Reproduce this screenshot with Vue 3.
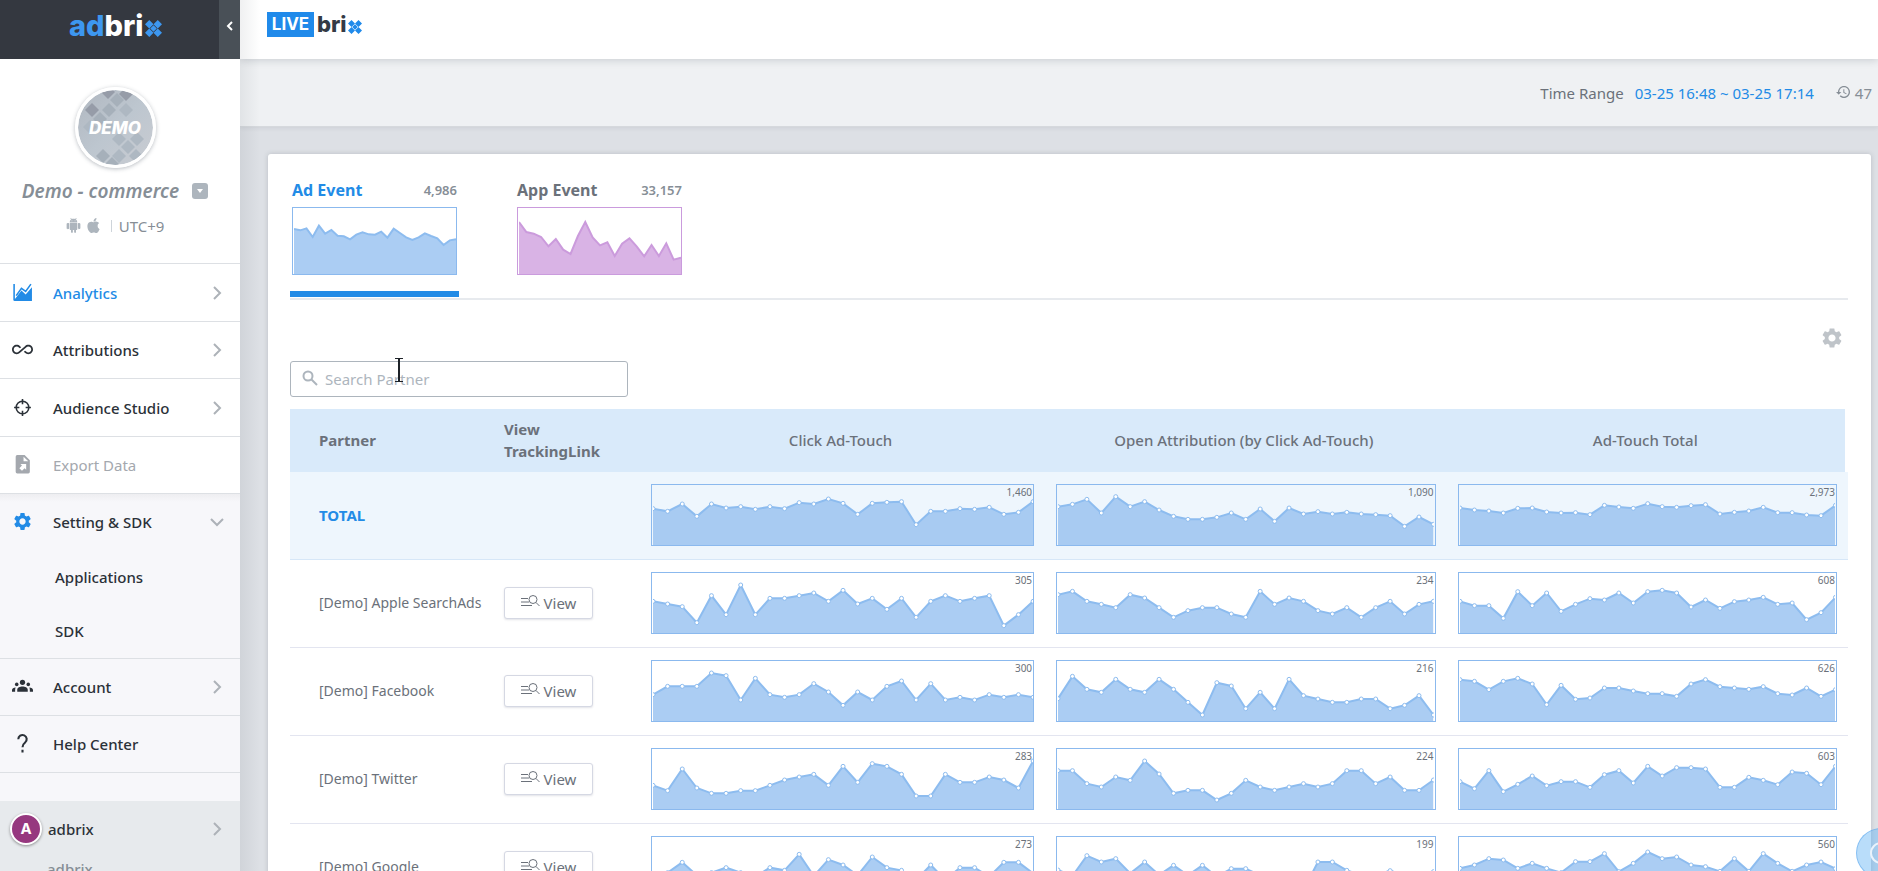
<script setup>
import { ref } from 'vue'

const PLOT_HEIGHT = 180
const search = ref('')

const mainNav = [
  { icon: 'chart', label: 'Analytics', state: 'active', arrow: true },
  { icon: 'infinity', label: 'Attributions', arrow: true },
  { icon: 'target', label: 'Audience Studio', arrow: true },
  { icon: 'export', label: 'Export Data', state: 'disabled' },
]

const bottomNav = [
  { icon: 'group', label: 'Account', arrow: true },
  { icon: 'help', label: 'Help Center' },
]

// Plot points are depths below the top edge of the plot, in thirds of a pixel.
const events = [
  {
    name: 'Ad Event', total: '4,986', tone: 'blue', active: true,
    points: [63, 67, 61, 87, 53, 77, 66, 83, 85, 94, 80, 73, 79, 80, 71, 89, 62, 75, 88, 96, 88, 76, 84, 91, 111, 97, 94],
  },
  {
    name: 'App Event', total: '33,157', tone: 'purple', active: false,
    points: [42, 72, 77, 87, 115, 93, 125, 138, 84, 42, 88, 112, 103, 144, 107, 91, 116, 145, 111, 144, 106, 155, 149],
  },
]

const rows = [
  {
    name: 'TOTAL', total: true,
    cells: [
      { value: '1,460', points: [71, 79, 57, 94, 57, 69, 65, 73, 65, 71, 53, 57, 42, 55, 88, 55, 52, 50, 119, 79, 79, 71, 73, 67, 88, 82, 50] },
      { value: '1,090', points: [65, 58, 43, 84, 35, 65, 50, 75, 94, 103, 103, 97, 84, 103, 72, 109, 69, 87, 80, 87, 82, 87, 89, 92, 124, 96, 118] },
      { value: '2,973', points: [69, 75, 78, 84, 70, 69, 81, 84, 83, 89, 61, 66, 70, 56, 65, 67, 62, 59, 87, 82, 78, 67, 83, 83, 90, 92, 61] },
    ],
  },
  {
    name: '[Demo] Apple SearchAds',
    cells: [
      { value: '305', points: [85, 93, 101, 149, 68, 125, 36, 125, 76, 76, 68, 60, 85, 52, 93, 76, 109, 76, 133, 85, 68, 85, 76, 68, 158, 125, 85] },
      { value: '234', points: [65, 55, 85, 94, 104, 65, 75, 104, 133, 113, 104, 104, 123, 133, 55, 94, 75, 85, 113, 123, 104, 133, 104, 85, 123, 94, 85] },
      { value: '608', points: [85, 98, 98, 136, 56, 98, 60, 115, 94, 77, 81, 60, 90, 56, 52, 60, 102, 81, 106, 86, 81, 73, 94, 90, 140, 119, 73] },
    ],
  },
  {
    name: '[Demo] Facebook',
    cells: [
      { value: '300', points: [101, 76, 76, 76, 36, 44, 117, 52, 101, 109, 101, 68, 93, 133, 93, 117, 76, 60, 117, 68, 117, 109, 117, 101, 109, 101, 109] },
      { value: '216', points: [113, 46, 85, 94, 55, 85, 94, 55, 85, 124, 162, 65, 75, 143, 94, 143, 55, 104, 114, 124, 124, 114, 114, 143, 133, 104, 162] },
      { value: '626', points: [56, 61, 86, 61, 52, 69, 131, 73, 115, 111, 81, 81, 90, 98, 98, 106, 69, 56, 77, 81, 85, 77, 98, 102, 81, 106, 86] },
    ],
  },
  {
    name: '[Demo] Twitter',
    cells: [
      { value: '283', points: [109, 125, 60, 117, 133, 133, 125, 125, 109, 93, 84, 76, 109, 52, 100, 44, 52, 76, 141, 141, 76, 100, 100, 84, 93, 117, 36] },
      { value: '224', points: [65, 65, 104, 114, 84, 94, 36, 75, 133, 124, 124, 153, 133, 94, 114, 124, 114, 104, 114, 104, 65, 65, 104, 84, 124, 124, 93] },
      { value: '603', points: [98, 119, 65, 128, 106, 81, 110, 98, 98, 115, 77, 65, 102, 52, 81, 56, 56, 60, 115, 115, 85, 94, 107, 69, 73, 107, 52] },
    ],
  },
  {
    name: '[Demo] Google',
    cells: [
      { value: '273', points: [125, 107, 76, 115, 107, 92, 107, 119, 92, 100, 52, 117, 68, 84, 115, 60, 92, 100, 129, 84, 129, 92, 92, 119, 76, 76, 109] },
      { value: '199', points: [99, 117, 56, 75, 65, 109, 75, 114, 85, 115, 85, 119, 95, 95, 115, 130, 135, 159, 75, 75, 100, 115, 115, 101, 115, 115, 104] },
      { value: '560', points: [94, 84, 65, 69, 94, 79, 94, 107, 74, 74, 50, 104, 79, 45, 65, 60, 84, 89, 103, 65, 103, 50, 79, 103, 84, 75, 95] },
    ],
  },
]

const avatarDiamonds = [
  [30, 2, 2], [48, 4, 2], [39, 10, 1], [14, 20, 2], [31, 20, 1], [48, 20, 0], [22, 29, 1],
  [12, 37, 0], [31, 37, 0], [41, 49, 0], [59, 49, 0], [50, 57, 0], [41, 66, 0], [58, 66, 0],
  [25, 66, 1], [34, 74, 1],
]

const line = (points) => points.map((y, i) => `${i},${y}`).join(' ')
const area = (points, height) => `0,${height} ${line(points)} ${points.length - 1},${height}`
</script>

<template>
  <div class="app">
    <aside class="sidebar">
      <div class="brand">
        <a class="brand-logo" href="#" aria-label="adbrix">
          <span class="brand-ad">ad</span><span>bri</span>
          <svg class="brand-x" viewBox="0 0 18 18" aria-hidden="true">
            <path d="M4.500 0L9 4.500 4.500 9 0 4.500zM13.500 0L18 4.500 13.500 9 9 4.500zM9 5.500l3.500 3.500L9 12.500 5.500 9zM4.500 9L9 13.500 4.500 18 0 13.500zM13.500 9l4.500 4.500-4.500 4.500L9 13.500z" />
          </svg>
        </a>
        <button class="collapse" type="button" aria-label="Collapse menu">
          <svg viewBox="0 0 8 10" aria-hidden="true"><path d="M6 1L2 5l4 4" /></svg>
        </button>
      </div>

      <section class="profile">
        <div class="avatar">
          <svg class="avatar-art" viewBox="0 0 75 75" aria-hidden="true">
            <defs>
              <linearGradient id="avatar-bg" x1="0" y1="0" x2="1" y2="1">
                <stop offset="0" stop-color="#b0b7c0" />
                <stop offset="0.5" stop-color="#bdc6cf" />
                <stop offset="1" stop-color="#c9ccd2" />
              </linearGradient>
            </defs>
            <rect width="75" height="75" fill="url(#avatar-bg)" />
            <path
              v-for="([x, y, shade], i) in avatarDiamonds"
              :key="i"
              :class="`diamond-${shade}`"
              :d="`M${x} ${y - 7}l7 7-7 7-7-7z`"
            />
          </svg>
          <span class="avatar-text">DEMO</span>
        </div>
        <div class="profile-name">
          <span>Demo - commerce</span>
          <button class="profile-menu" type="button" aria-label="Switch app">
            <svg viewBox="0 0 8 6" aria-hidden="true"><path d="M1 1h6L4 5z" /></svg>
          </button>
        </div>
        <div class="profile-meta">
          <svg class="platform" viewBox="0 0 24 24" aria-hidden="true">
            <path d="M6 18c0 .55.45 1 1 1h1v3.500c0 .83.67 1.500 1.500 1.500s1.500-.67 1.500-1.500V19h2v3.500c0 .83.67 1.500 1.500 1.500s1.500-.67 1.500-1.500V19h1c.55 0 1-.45 1-1V8H6v10zM3.500 8C2.400 8 1 8.670 1 9.500v7c0 .83.67 1.500 2 1.500S5 17.330 5 16.500v-7C5 8.670 4.330 8 3.500 8zm17 0c-.83 0-1.500.67-1.500 1.500v7c0 .83.67 1.500 1.500 1.500S23 17.330 23 16.500v-7c0-.83-1.670-1.500-2.500-1.500zm-4.970-5.840l1.300-1.300c.2-.2.2-.51 0-.71-.2-.2-.51-.2-.71 0l-1.480 1.480C13.850 1.230 12.950 1 12 1c-.96 0-1.860.23-2.660.63L7.850.15c-.2-.2-.51-.2-.71 0-.2.2-.2.51 0 .71l1.310 1.310C6.970 3.260 6 5.010 6 7h12c0-1.990-.97-3.750-2.470-4.840zM10 5H9V4h1v1zm5 0h-1V4h1v1z" />
          </svg>
          <svg class="platform" viewBox="0 0 24 24" aria-hidden="true">
            <path d="M12.152 6.896c-.948 0-2.415-1.078-3.960-1.040-2.040.027-3.910 1.183-4.961 3.014-2.117 3.675-.546 9.103 1.519 12.090 1.013 1.454 2.208 3.090 3.792 3.039 1.520-.065 2.090-.987 3.935-.987 1.831 0 2.350.987 3.960.948 1.637-.026 2.676-1.480 3.676-2.948 1.156-1.688 1.636-3.325 1.662-3.415-.039-.013-3.182-1.221-3.220-4.857-.026-3.040 2.480-4.494 2.597-4.559-1.429-2.090-3.623-2.324-4.390-2.376-2-.156-3.675 1.090-4.610 1.090zM15.530 3.830c.843-1.012 1.400-2.427 1.245-3.830-1.207.052-2.662.805-3.532 1.818-.78.896-1.454 2.338-1.273 3.714 1.338.104 2.715-.688 3.559-1.701" />
          </svg>
          <span class="divider"></span>
          <span>UTC+9</span>
        </div>
      </section>

      <nav class="menu" aria-label="Main">
        <a v-for="item in mainNav" :key="item.label" class="menu-item" :class="item.state" href="#">
          <svg v-if="item.icon === 'chart'" class="menu-icon" viewBox="0 0 20 20" aria-hidden="true">
            <path class="thin" d="M2 2v15.500M4 13l5-7 4 3 5-7" />
            <path d="M2 18v-2h1l6-8 4 4 6-7v13z" />
          </svg>
          <svg v-else-if="item.icon === 'infinity'" class="menu-icon" viewBox="0 0 24 24" aria-hidden="true">
            <path d="M18.600 6.620C17.160 6.620 15.800 7.180 14.830 8.150L7.800 14.390C7.160 15.030 6.310 15.380 5.400 15.380 3.530 15.380 2 13.870 2 12 2 10.130 3.530 8.620 5.400 8.620 6.310 8.620 7.160 8.970 7.840 9.650L8.970 10.650 10.500 9.310 9.220 8.200C8.200 7.180 6.840 6.620 5.400 6.620 2.420 6.620 0 9.040 0 12 0 14.960 2.420 17.380 5.400 17.380 6.840 17.380 8.200 16.820 9.170 15.850L16.200 9.610C16.840 8.970 17.690 8.620 18.600 8.620 20.470 8.620 22 10.130 22 12 22 13.870 20.470 15.380 18.600 15.380 17.700 15.380 16.840 15.030 16.160 14.350L15 13.340 13.500 14.680 14.780 15.800C15.800 16.810 17.150 17.370 18.600 17.370 21.580 17.370 24 14.960 24 12 24 9 21.580 6.620 18.600 6.620Z" />
          </svg>
          <svg v-else-if="item.icon === 'target'" class="menu-icon" viewBox="0 0 20 20" aria-hidden="true">
            <circle class="ring" cx="10" cy="10" r="6" />
            <path class="thin" d="M10 2v5M10 13v5M2 10h5M13 10h5" />
          </svg>
          <svg v-else class="menu-icon" viewBox="0 0 20 20" aria-hidden="true">
            <path fill-rule="evenodd" d="M5 1h7l5 5v11a1.500 1.500 0 0 1-1.500 1.500h-10.500A1.500 1.500 0 0 1 3.500 17V2.500A1.500 1.500 0 0 1 5 1zM11 2.500V7h4.500zM8 9.500l1.500 1.500L7 13.500l2.500 2.500 2.500-2.500 1.500 1.500V9.500z" />
          </svg>
          <span>{{ item.label }}</span>
          <svg v-if="item.arrow" class="arrow" viewBox="0 0 14 14" aria-hidden="true"><path d="M4 1l6 6-6 6" /></svg>
        </a>
      </nav>

      <nav class="menu menu-lower" aria-label="Settings">
        <a class="menu-item open" href="#">
          <svg class="menu-icon gear-blue" viewBox="0 0 24 24" aria-hidden="true">
            <path d="M19.140 12.940c.04-.3.06-.61.06-.94 0-.32-.02-.64-.07-.94l2.030-1.580c.18-.14.23-.41.12-.61l-1.920-3.320c-.12-.22-.37-.29-.59-.22l-2.390.96c-.5-.38-1.030-.7-1.620-.94l-.36-2.540c-.04-.24-.24-.41-.48-.41h-3.840c-.24 0-.43.17-.47.41l-.36 2.540c-.59.24-1.130.57-1.620.94l-2.390-.96c-.22-.08-.47 0-.59.22L2.740 8.870c-.12.21-.08.47.12.61l2.030 1.580c-.05.3-.09.63-.09.94s.02.64.07.94l-2.030 1.580c-.18.14-.23.41-.12.61l1.920 3.320c.12.22.37.29.59.22l2.390-.96c.5.38 1.030.7 1.620.94l.36 2.540c.05.24.24.41.48.41h3.840c.24 0 .44-.17.47-.41l.36-2.540c.59-.24 1.130-.56 1.620-.94l2.390.96c.22.08.47 0 .59-.22l1.920-3.320c.12-.22.07-.47-.12-.61l-2.010-1.580zM12 15.600c-1.980 0-3.600-1.620-3.600-3.600s1.620-3.600 3.600-3.600 3.600 1.620 3.600 3.600-1.620 3.600-3.600 3.600z" />
          </svg>
          <span>Setting &amp; SDK</span>
          <svg class="arrow" viewBox="0 0 14 14" aria-hidden="true"><path d="M1 4l6 6 6-6" /></svg>
        </a>
        <div class="submenu">
          <a href="#">Applications</a>
          <a href="#">SDK</a>
        </div>
        <a v-for="item in bottomNav" :key="item.label" class="menu-item" href="#">
          <svg v-if="item.icon === 'group'" class="menu-icon" viewBox="0 0 20 20" aria-hidden="true">
            <circle cx="10" cy="6" r="2.500" />
            <circle cx="4.500" cy="8" r="1.700" />
            <circle cx="15.500" cy="8" r="1.700" />
            <path d="M5 15v-2c0-2 2.500-3 5-3s5 1 5 3v2zM0 15v-1.500c0-1.500 1.500-2.500 3.500-2.500C3 12 3 13 3 15zM20 15v-1.500c0-1.500-1.500-2.500-3.500-2.500.5 1 .5 2 .5 4z" />
          </svg>
          <svg v-else class="menu-icon" viewBox="0 0 20 20" aria-hidden="true">
            <path class="bold" d="M6 6a4 4 0 1 1 6.500 3C11 10.200 10 11 10 13.500M10 16v2.500" />
          </svg>
          <span>{{ item.label }}</span>
          <svg v-if="item.arrow" class="arrow" viewBox="0 0 14 14" aria-hidden="true"><path d="M4 1l6 6-6 6" /></svg>
        </a>
      </nav>

      <footer class="account">
        <a class="account-row" href="#">
          <span class="account-badge">A</span>
          <span>adbrix</span>
          <svg class="arrow" viewBox="0 0 14 14" aria-hidden="true"><path d="M4 1l6 6-6 6" /></svg>
        </a>
        <p class="account-company">adbrix</p>
      </footer>
    </aside>

    <div class="content">
      <header class="topbar">
        <h1 class="live-logo">
          <span class="live">LIVE</span><span>bri</span>
          <svg class="live-x" viewBox="0 0 18 18" aria-hidden="true">
            <path d="M4.500 0L9 4.500 4.500 9 0 4.500zM13.500 0L18 4.500 13.500 9 9 4.500zM9 5.500l3.500 3.500L9 12.500 5.500 9zM4.500 9L9 13.500 4.500 18 0 13.500zM13.500 9l4.500 4.500-4.500 4.500L9 13.500z" />
          </svg>
        </h1>
      </header>

      <div class="rangebar">
        <span>Time Range</span>
        <a class="range" href="#">03-25 16:48 ~ 03-25 17:14</a>
        <span class="refresh">
          <svg viewBox="1 3 21 18" aria-hidden="true">
            <path d="M13 3c-4.970 0-9 4.030-9 9H1l3.890 3.890.07.14L9 12H6c0-3.870 3.130-7 7-7s7 3.130 7 7-3.130 7-7 7c-1.930 0-3.680-.79-4.940-2.060l-1.420 1.420C8.270 19.990 10.510 21 13 21c4.970 0 9-4.030 9-9s-4.030-9-9-9zm-1 5v5l4.280 2.540.72-1.210-3.500-2.080V8H12z" />
          </svg>
          47
        </span>
      </div>

      <main class="card">
        <div class="tabs">
          <button
            v-for="event in events"
            :key="event.name"
            type="button"
            class="tab"
            :class="[event.tone, { active: event.active }]"
          >
            <span class="tab-head"><span>{{ event.name }}</span><span class="tab-total">{{ event.total }}</span></span>
            <span class="spark tab-spark">
              <svg :viewBox="`0 0 ${event.points.length - 1} 198`" preserveAspectRatio="none" aria-hidden="true">
                <polygon :points="area(event.points, 198)" />
                <polyline :points="line(event.points)" />
              </svg>
            </span>
          </button>
        </div>

        <div class="tools">
          <button class="table-settings" type="button" aria-label="Table settings">
            <svg viewBox="2 2 20 20" aria-hidden="true">
              <path d="M19.140 12.940c.04-.3.06-.61.06-.94 0-.32-.02-.64-.07-.94l2.030-1.580c.18-.14.23-.41.12-.61l-1.920-3.320c-.12-.22-.37-.29-.59-.22l-2.390.96c-.5-.38-1.030-.7-1.620-.94l-.36-2.540c-.04-.24-.24-.41-.48-.41h-3.840c-.24 0-.43.17-.47.41l-.36 2.540c-.59.24-1.130.57-1.620.94l-2.390-.96c-.22-.08-.47 0-.59.22L2.740 8.870c-.12.21-.08.47.12.61l2.030 1.580c-.05.3-.09.63-.09.94s.02.64.07.94l-2.030 1.580c-.18.14-.23.41-.12.61l1.920 3.320c.12.22.37.29.59.22l2.390-.96c.5.38 1.030.7 1.620.94l.36 2.540c.05.24.24.41.48.41h3.840c.24 0 .44-.17.47-.41l.36-2.540c.59-.24 1.130-.56 1.620-.94l2.390.96c.22.08.47 0 .59-.22l1.920-3.320c.12-.22.07-.47-.12-.61l-2.010-1.580zM12 15.600c-1.980 0-3.600-1.620-3.600-3.600s1.620-3.600 3.600-3.600 3.600 1.620 3.600 3.600-1.620 3.600-3.600 3.600z" />
            </svg>
          </button>
        </div>

        <div class="search">
          <svg class="search-icon" viewBox="0 0 16 16" aria-hidden="true">
            <circle cx="6" cy="6" r="4.500" />
            <path d="M9.500 9.500L15 15" />
          </svg>
          <input v-model="search" type="text" placeholder="Search Partner" aria-label="Search Partner" />
          <svg class="text-cursor" viewBox="0 0 8 24" aria-hidden="true">
            <path class="cursor-bar" d="M4 1v22" />
            <path class="cursor-cap" d="M0 .5h8M0 23.500h8" />
          </svg>
        </div>

        <table class="partners">
          <colgroup>
            <col class="col-name" />
            <col class="col-link" />
            <col class="col-click" />
            <col span="2" />
          </colgroup>
          <thead>
            <tr>
              <th class="left" scope="col">Partner</th>
              <th class="left link" scope="col">View TrackingLink</th>
              <th scope="col">Click Ad-Touch</th>
              <th scope="col">Open Attribution (by Click Ad-Touch)</th>
              <th scope="col">Ad-Touch Total</th>
            </tr>
          </thead>
          <tbody>
            <tr v-for="row in rows" :key="row.name" :class="{ total: row.total }">
              <td class="name">{{ row.name }}</td>
              <td class="link">
                <button v-if="!row.total" class="view" type="button">
                  <svg viewBox="0 0 19 12" aria-hidden="true">
                    <path d="M0 3.500h7M0 7h8M0 10.500h11" />
                    <circle cx="12" cy="4.500" r="4" />
                    <path d="M15 7.500l3.500 3.500" />
                  </svg>
                  View
                </button>
              </td>
              <td v-for="(cell, c) in row.cells" :key="cell.value" class="plot">
                <div class="spark blue" :class="{ flush: c === 0 }">
                  <svg class="plot-svg" aria-hidden="true">
                    <svg
                      width="100%"
                      height="100%"
                      :viewBox="`0 0 ${cell.points.length - 1} ${PLOT_HEIGHT}`"
                      preserveAspectRatio="none"
                    >
                      <polygon :points="area(cell.points, PLOT_HEIGHT)" />
                      <polyline :points="line(cell.points)" />
                    </svg>
                    <circle
                      v-for="(y, i) in cell.points"
                      :key="i"
                      :cx="`${(i / (cell.points.length - 1)) * 100}%`"
                      :cy="`${(y / PLOT_HEIGHT) * 100}%`"
                      r="2"
                    />
                  </svg>
                  <span class="plot-value">{{ cell.value }}</span>
                </div>
              </td>
            </tr>
          </tbody>
        </table>
      </main>
    </div>

    <button class="chat" type="button" aria-label="Open chat">
      <svg viewBox="0 0 24 24" aria-hidden="true"><circle cx="12" cy="12" r="10" /></svg>
    </button>
  </div>
</template>

<style>
body {
  overflow: hidden;
}
</style>

<style scoped>
* {
  box-sizing: border-box;
}

.app {
  position: relative;
  display: flex;
  height: 100vh;
  overflow: hidden;
  background: #dde0e5;
  color: #6b717a;
  font: 15px/22px "Noto Sans", "Open Sans", sans-serif;
}

button {
  padding: 0;
  border: 0;
  background: none;
  color: inherit;
  font: inherit;
  cursor: pointer;
}

a {
  color: inherit;
  text-decoration: none;
}

svg {
  display: block;
}

/* Sidebar */
.sidebar {
  position: relative;
  z-index: 3;
  flex: 0 0 240px;
  overflow: hidden;
  background: #f7f7fa;
}

.content::before {
  content: "";
  position: absolute;
  z-index: 2;
  inset: 0 auto 0 0;
  width: 20px;
  background: linear-gradient(90deg, rgba(60, 70, 80, 0.08), rgba(60, 70, 80, 0));
  pointer-events: none;
}

.brand {
  display: flex;
  height: 59px;
  background: #343840;
}

.brand-logo {
  display: flex;
  flex: 1;
  align-items: center;
  padding: 0 0 8px 69px;
  color: #fff;
  font: 800 29px/50px Inter, sans-serif;
}

.brand-ad {
  color: #3d97f0;
}

.brand-x {
  width: 17px;
  margin: 5px 0 0 1px;
  fill: #3d97f0;
}

.collapse {
  display: flex;
  align-items: center;
  justify-content: center;
  width: 21px;
  padding-bottom: 8px;
  background: #495057;
}

.collapse svg {
  width: 8px;
  fill: none;
  stroke: #fff;
  stroke-width: 2;
}

.profile {
  display: flex;
  flex-direction: column;
  align-items: center;
  height: 204px;
  padding: 28px 10px 0 0;
  background: #fff;
}

.avatar {
  position: relative;
  display: grid;
  place-items: center;
  width: 81px;
  height: 81px;
  overflow: hidden;
  border: 3px solid #fff;
  border-radius: 50%;
  box-shadow: 0 1px 4px rgba(50, 60, 75, 0.35);
}

.avatar > * {
  grid-area: 1 / 1;
}

.avatar-art {
  width: 75px;
  height: 75px;
  border-radius: 50%;
}

.diamond-0 {
  fill: #aeb8c2;
}

.diamond-1 {
  fill: #a6b0ba;
}

.diamond-2 {
  fill: #969ca8;
}

.avatar-text {
  z-index: 1;
  color: #fff;
  font: italic 800 17px/20px Inter, sans-serif;
}

.profile-name {
  display: flex;
  align-items: center;
  gap: 13px;
  margin-top: 11px;
  color: #868e96;
  font-size: 19px;
  font-style: italic;
  font-weight: 600;
  line-height: 24px;
}

.profile-menu {
  display: grid;
  place-items: center;
  width: 16px;
  height: 16px;
  border-radius: 3px;
  background: #adb5bd;
}

.profile-menu svg {
  width: 8px;
  fill: #fff;
}

.profile-meta {
  display: flex;
  align-items: center;
  gap: 5px;
  margin-top: 12px;
  color: #868e96;
}

.platform {
  width: 15px;
  height: 15px;
  margin-bottom: 2px;
  fill: #adb5bd;
}

.divider {
  width: 1px;
  height: 12px;
  margin: 0 2px 0 5px;
  background: #ced4da;
}

.menu-item {
  display: flex;
  align-items: center;
  height: 58px;
  padding: 0 16px 0 12px;
  border-top: 1px solid #dde0e4;
  background: #fff;
  color: #2b3138;
  font-weight: 500;
}

.menu-item:nth-child(even) {
  height: 57px;
}

.menu-icon {
  width: 21px;
  height: 21px;
  margin: 0 20px 1px 0;
  fill: currentColor;
}

.menu-icon .thin,
.menu-icon .ring,
.menu-icon .bold {
  fill: none;
  stroke: currentColor;
  stroke-width: 1.5;
}

.menu-icon .bold {
  stroke-width: 2;
}

.menu-item.active {
  color: #228be6;
}

.menu-item.disabled {
  color: #a4a8ae;
  font-weight: 400;
}

.arrow {
  width: 14px;
  height: 14px;
  margin-left: auto;
  fill: none;
  stroke: #adb2b8;
  stroke-width: 2;
}

.menu-lower .menu-item {
  height: 57px;
  background: transparent;
}

.menu-lower .menu-item.open {
  background: linear-gradient(#eeeef1, #f7f7fa 8px);
}

.menu-lower {
  border-bottom: 1px solid #dde0e4;
}

.menu-icon.gear-blue {
  fill: #228be6;
}

.submenu a {
  display: block;
  padding: 16px 55px;
  color: #2b3138;
  font-weight: 500;
}

.account {
  margin-top: 28px;
  padding: 12px 16px 20px 10px;
  background: #e7eaed;
  color: #2b3138;
  font-weight: 500;
}

.account-row {
  display: flex;
  align-items: center;
  gap: 6px;
}

.account-badge {
  display: grid;
  place-items: center;
  width: 32px;
  height: 32px;
  border: 2px solid #fff;
  border-radius: 50%;
  background: #96387f;
  box-shadow: 0 1px 3px rgba(0, 0, 0, 0.4);
  color: #fff;
  font: 700 15px/20px Inter, sans-serif;
}

.account-company {
  margin: 13px 0 0 37px;
  color: #868e96;
}

/* Top area */
.content {
  position: relative;
  flex: 1;
  min-width: 0;
}

.topbar {
  position: relative;
  z-index: 1;
  height: 59px;
  padding: 12px 27px;
  background: #fff;
  box-shadow: 0 1px 8px rgba(60, 70, 80, 0.22);
}

.live-logo {
  display: flex;
  align-items: center;
  margin: 0;
  color: #343a45;
  font: 800 22px/25px Inter, sans-serif;
}

.live {
  width: 47px;
  margin-right: 3px;
  background: #208aea;
  color: #fff;
  font-size: 17px;
  font-weight: 700;
  text-align: center;
}

.live-x {
  width: 14px;
  margin: 4px 0 0 1px;
  fill: #208aea;
}

.rangebar {
  display: flex;
  align-items: center;
  justify-content: flex-end;
  height: 68px;
  padding: 0 6px 0 27px;
  border-bottom: 1px solid #d6d9dd;
  background: #eff1f3;
  box-shadow: 0 1px 4px rgba(60, 70, 80, 0.1);
}

.range {
  margin: 0 22px 0 11px;
  color: #228be6;
}

.refresh {
  display: flex;
  align-items: center;
  gap: 5px;
  color: #868e96;
}

.refresh svg {
  width: 14px;
  height: 12px;
  margin-bottom: 2px;
  fill: currentColor;
}

/* Card */
.card {
  margin: 27px 7px 0 28px;
  padding: 25px 23px 25px 22px;
  border-radius: 3px;
  background: #fff;
  box-shadow: 0 0 5px rgba(60, 70, 80, 0.22);
}

.tabs {
  display: flex;
  gap: 56px;
  border-bottom: 2px solid #e7eaee;
}

.tab {
  width: 169px;
  margin-bottom: 1px;
  padding: 0 2px 16px;
  border-bottom: 6px solid transparent;
}

.tab.active {
  border-color: #228be6;
}

.tab-head {
  display: flex;
  align-items: center;
  justify-content: space-between;
  margin-bottom: 6px;
  font-size: 16px;
  font-weight: 700;
}

.tab.active .tab-head {
  color: #228be6;
}

.tab .tab-total {
  color: #868e96;
  font-size: 13px;
  font-weight: 600;
}

.spark {
  position: relative;
  display: block;
  height: 62px;
  padding: 0 1px;
  border: 1px solid #8bb9ee;
}

.spark.flush,
.tab-spark {
  padding-right: 0;
}

.tab-spark {
  height: 68px;
}

.tab.purple .spark {
  border-color: #ca9bdd;
}

.spark > svg {
  width: 100%;
  height: 100%;
}

.spark polygon {
  fill: #abcdf3;
}

.spark polyline {
  fill: none;
  stroke: #8dbcef;
  stroke-width: 2;
  vector-effect: non-scaling-stroke;
}

.purple .spark polygon {
  fill: #d9b3e5;
}

.purple .spark polyline {
  stroke: #cb9bdc;
}

.tools {
  display: flex;
  justify-content: flex-end;
  padding: 28px 6px 13px;
}

.table-settings svg {
  width: 20px;
  height: 20px;
  fill: #bfc4c9;
}

.search {
  position: relative;
  width: 338px;
}

.search input {
  display: block;
  width: 100%;
  height: 36px;
  padding: 0 12px 0 34px;
  border: 1px solid #adb5bd;
  border-radius: 3px;
  outline: 0;
  background: #fff;
  font: inherit;
}

.search input::placeholder {
  color: #adb5bd;
  opacity: 1;
}

.search-icon {
  position: absolute;
  top: 9px;
  left: 12px;
  width: 16px;
  fill: none;
  stroke: #adb5bd;
  stroke-width: 2;
}

.text-cursor {
  position: absolute;
  top: -3px;
  left: 105px;
  width: 8px;
  height: 24px;
  stroke: #1d2228;
}

.cursor-bar {
  stroke-width: 2;
}

/* Table */
.partners {
  width: 100%;
  margin-top: 12px;
  border-collapse: separate;
  border-spacing: 0;
  table-layout: fixed;
}

.col-name {
  width: 204px;
}

.col-link {
  width: 146px;
}

.col-click {
  width: 26%;
}

.partners th {
  height: 63px;
  padding: 0 11px 2px;
  background: #d9eafa;
  font-weight: 600;
}

.partners th:nth-child(n + 3) {
  padding-right: 15px;
  font-weight: 500;
}

.partners th:last-child {
  padding-right: 12px;
  border-right: 3px solid #fff;
}

.partners th.left {
  font-weight: 700;
  text-align: left;
}

.partners td {
  height: 88px;
  padding: 0 0 2px;
  border-bottom: 1px solid #e3e5f0;
}

.partners th:first-child,
.partners .name {
  padding-left: 29px;
}

.partners .link {
  padding-right: 30px;
  padding-left: 10px;
}

.partners td.name {
  font-size: 14px;
  white-space: nowrap;
}

.partners .total td {
  border-color: #d6e7f8;
  background: #eef6fd;
}

.partners .total td.name {
  color: #228be6;
  font-size: 15px;
  font-weight: 700;
}

.partners td.plot {
  padding: 12px 11px 13px;
}

.total .spark polygon {
  fill: #a8cbf2;
}

.spark circle {
  fill: #fff;
  stroke: #8dbcef;
  stroke-width: 1;
}

.plot-value {
  position: absolute;
  top: 0;
  right: 1px;
  font-size: 10px;
  line-height: 14px;
}

.view {
  display: flex;
  align-items: center;
  justify-content: center;
  gap: 4px;
  width: 89px;
  height: 32px;
  border: 1px solid #d5d8e3;
  border-radius: 3px;
  background: #fff;
  box-shadow: 0 1px 2px rgba(60, 70, 100, 0.15);
}

.view svg {
  width: 19px;
  height: 12px;
  margin-bottom: 3px;
  fill: none;
  stroke: currentColor;
}

.chat {
  position: absolute;
  z-index: 4;
  right: -28px;
  bottom: -7px;
  display: grid;
  place-items: center;
  width: 50px;
  height: 50px;
  border: 1px solid rgba(80, 160, 235, 0.5);
  border-radius: 50%;
  background: rgba(100, 180, 245, 0.45);
}

.chat svg {
  width: 24px;
  fill: none;
  stroke: #eaf3fc;
  stroke-width: 2;
}
</style>
